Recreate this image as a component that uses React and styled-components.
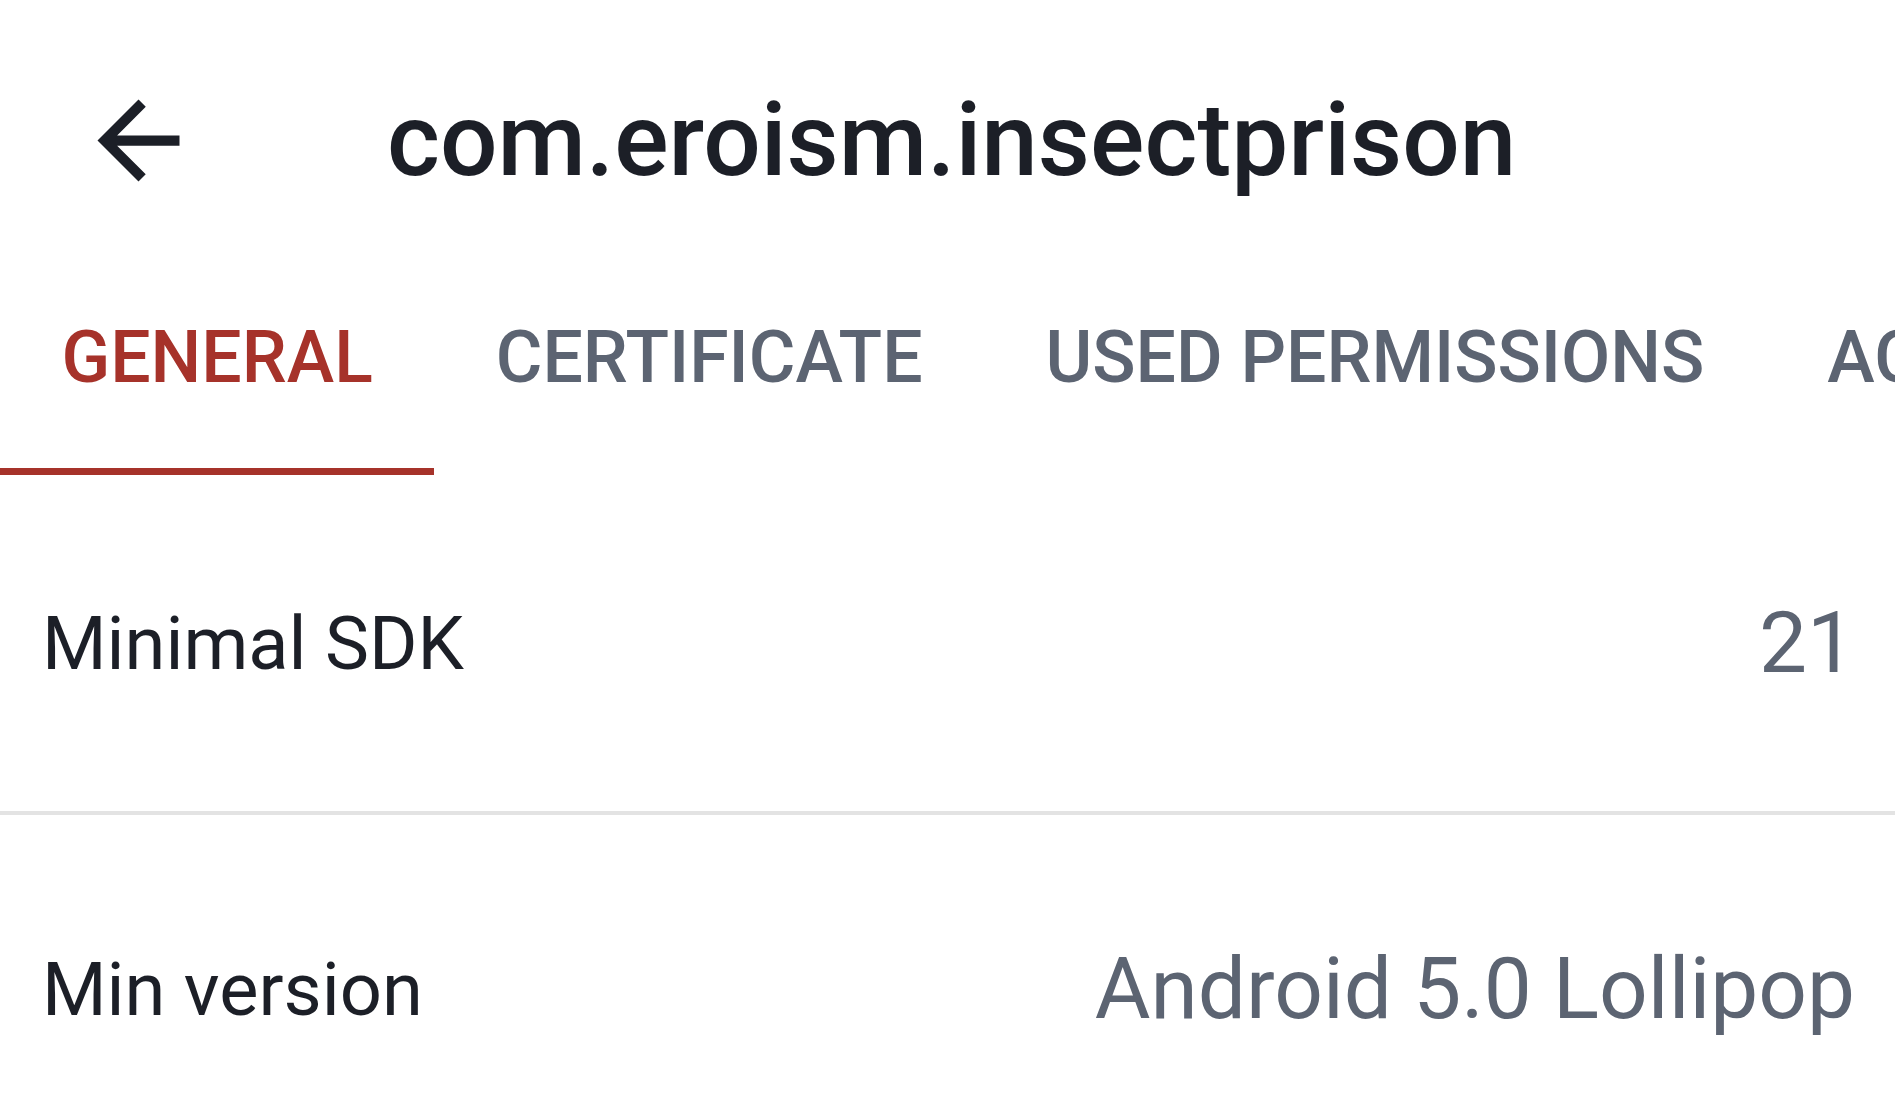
import styled, { createGlobalStyle } from "styled-components";

const GlobalStyle = createGlobalStyle`
  html, body {
    margin: 0;
    padding: 0;
    background: #ffffff;
  }
  body {
    font-family: Roboto, "Noto Sans", "Liberation Sans", sans-serif;
    overflow: hidden;
  }
`;

const Screen = styled.div`
  width: 1895px;
  height: 1116px;
  overflow: hidden;
  background: #ffffff;
  display: flex;
  flex-direction: column;
`;

const Toolbar = styled.header`
  flex-shrink: 0;
  height: 200px;
  padding-top: 40px;
  padding-left: 77px;
  display: flex;
  align-items: center;
  gap: 187px;
`;

const BackButton = styled.button`
  width: 123px;
  height: 123px;
  padding: 0;
  border: none;
  background: transparent;
  color: #1c1f27;
  display: flex;
  svg {
    width: 123px;
    height: 123px;
  }
`;

const Title = styled.h1`
  margin: 0;
  font-size: 101.5px;
  font-weight: 500;
  color: #1c1f27;
  white-space: nowrap;
`;

const TabBar = styled.nav`
  display: flex;
  overflow: hidden;
  flex-shrink: 0;
`;

const Tab = styled.div`
  flex-shrink: 0;
  height: 235px;
  padding: 7px 61.5px 0;
  box-sizing: border-box;
  display: flex;
  align-items: center;
  font-size: 71.5px;
  font-weight: 500;
  white-space: nowrap;
  color: ${(p) => (p.$active ? "#a6322a" : "#5c6472")};
  border-bottom: 7px solid ${(p) => (p.$active ? "#a6322a" : "transparent")};
`;

const InfoList = styled.div`
  flex-shrink: 0;
  display: flex;
  flex-direction: column;
`;

const InfoRow = styled.div`
  height: 336px;
  flex-shrink: 0;
  padding: 0 40px 0 42px;
  display: flex;
  align-items: center;
  justify-content: space-between;
  border-bottom: 4px solid #e3e3e3;
  &:last-child {
    border-bottom: none;
    height: 348px;
  }
`;

const Label = styled.span`
  font-size: 74px;
  color: #1c1f27;
`;

const Value = styled.span`
  font-size: 85.5px;
  color: #5c6472;
`;

const tabs = ["GENERAL", "CERTIFICATE", "USED PERMISSIONS", "ACTIVITIES"];

const info = [
  { label: "Minimal SDK", value: "21" },
  { label: "Min version", value: "Android 5.0 Lollipop" },
];

export default function App() {
  return (
    <>
      <GlobalStyle />
      <Screen>
        <Toolbar>
          <BackButton aria-label="Back">
            <svg viewBox="0 0 24 24" fill="currentColor">
              <path d="M20 11H7.83l5.59-5.59L12 4l-8 8 8 8 1.41-1.41L7.83 13H20v-2z" />
            </svg>
          </BackButton>
          <Title>com.eroism.insectprison</Title>
        </Toolbar>
        <TabBar>
          {tabs.map((t, i) => (
            <Tab key={t} $active={i === 0}>
              {t}
            </Tab>
          ))}
        </TabBar>
        <InfoList>
          {info.map((row) => (
            <InfoRow key={row.label}>
              <Label>{row.label}</Label>
              <Value>{row.value}</Value>
            </InfoRow>
          ))}
        </InfoList>
      </Screen>
    </>
  );
}
